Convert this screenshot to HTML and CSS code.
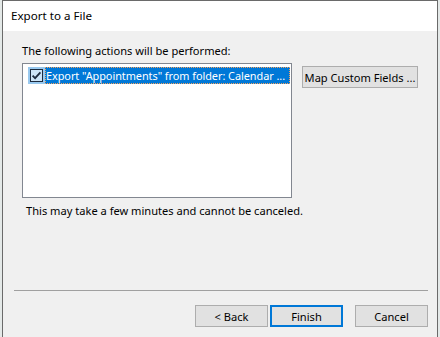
FILE: index.html
```html
<!DOCTYPE html>
<html>
<head>
<meta charset="utf-8">
<link rel="stylesheet" href="styles.css">
</head>
<body>
<div class="dialog">
  <div class="titlebar">Export to a File</div>
  <div class="content">
    <div class="label">The following actions will be performed:</div>
    <div class="row">
      <div class="listbox">
        <div class="item">
          <span class="checkcell">
            <svg class="check" width="13" height="13" viewBox="0 0 13 13">
              <rect x="0.5" y="0.5" width="12" height="12" fill="#cce4f7" stroke="#1c2b3e"/>
              <path d="M2.6 6.6 L5.1 9.1 L10.4 3.4" fill="none" stroke="#1c2b3e" stroke-width="1.8"/>
            </svg>
          </span>
          <span class="itemtext">Export "Appointments" from folder: Calendar ...</span>
        </div>
      </div>
      <button class="btn map">Map Custom Fields ...</button>
    </div>
    <div class="note">This may take a few minutes and cannot be canceled.</div>
  </div>
  <div class="footer">
    <div class="sep"></div>
    <div class="buttons">
      <button class="btn nav">&lt; Back</button>
      <button class="btn nav primary">Finish</button>
      <button class="btn nav cancel">Cancel</button>
    </div>
  </div>
</div>
</body>
</html>
```
FILE: styles.css
```css
html, body {
  margin: 0;
  padding: 0;
}
body {
  background: #e4e9e8;
  width: 440px;
  height: 337px;
  overflow: hidden;
  font-family: "Noto Sans", "Open Sans", sans-serif;
  font-size: 11.1px;
  color: #000;
}
.dialog {
  margin-left: 2px;
  width: 436px;
  height: 337px;
  box-sizing: border-box;
  border: 1px solid #6a6a6a;
  border-bottom: none;
  background: #f0f0f0;
  display: flex;
  flex-direction: column;
}
.titlebar {
  background: #fff;
  height: 30px;
  padding-left: 8px;
  line-height: 30px;
  font-size: 11.6px;
}
.content {
  display: flex;
  flex-direction: column;
  padding-left: 19px;
}
.label {
  margin-top: 12px;
  line-height: 16px;
  height: 16px;
}
.row {
  display: flex;
  margin-top: 4px;
  align-items: flex-start;
}
.listbox {
  width: 270px;
  height: 135px;
  box-sizing: border-box;
  border: 1px solid #828790;
  background: #fff;
  padding: 3px 0 0 5px;
}
.item {
  display: flex;
  height: 17px;
  width: 262px;
}
.checkcell {
  width: 17px;
  height: 17px;
  background: #99c9ef;
  display: flex;
  align-items: center;
  justify-content: center;
}
.itemtext {
  flex: 1;
  background: #0078d7;
  color: #fff;
  border: 1px dotted #f7a35c;
  box-sizing: border-box;
  line-height: 15px;
  padding-left: 0;
  font-size: 10.9px;
  letter-spacing: -0.05px;
  white-space: nowrap;
  overflow: hidden;
}
.btn {
  font-family: inherit;
  font-size: 11.1px;
  color: #000;
  background: #e1e1e1;
  border: 1px solid #adadad;
  box-sizing: border-box;
  height: 22px;
  padding: 0;
  margin: 0;
}
.map {
  margin-left: 10px;
  margin-top: 3px;
  width: 116px;
  white-space: nowrap;
}
.note {
  margin-top: 5px;
  padding-left: 4px;
  line-height: 16px;
}
.footer {
  margin-top: auto;
  padding-bottom: 10px;
}
.sep {
  margin-left: 11px;
  width: 414px;
  height: 1px;
  background: #a0a0a0;
}
.buttons {
  display: flex;
  justify-content: flex-end;
  margin-top: 14px;
  margin-right: 9px;
}
.nav {
  width: 73px;
}
.primary {
  border: 2px solid #0078d7;
  margin-left: 2px;
}
.cancel {
  margin-left: 12px;
}
```
